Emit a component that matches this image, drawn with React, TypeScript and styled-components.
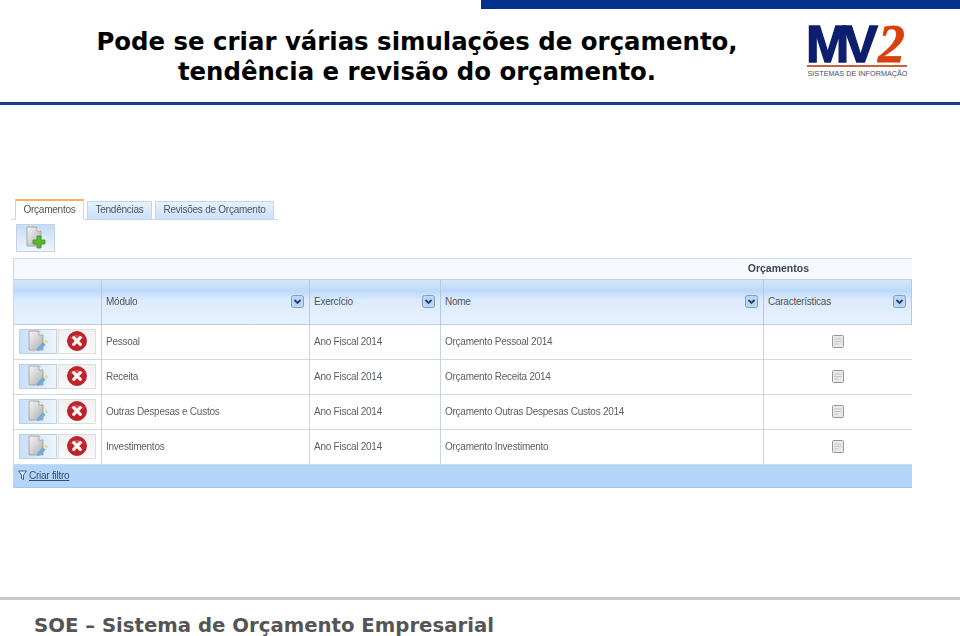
import styled, { createGlobalStyle } from "styled-components";

const GlobalStyle = createGlobalStyle`
  html, body {
    margin: 0;
    padding: 0;
    background: #fff;
  }
  * {
    box-sizing: border-box;
  }
`;

const Page = styled.div`
  width: 960px;
  height: 636px;
  overflow: hidden;
  display: flex;
  flex-direction: column;
`;

const Header = styled.header`
  height: 105px;
  flex: none;
  border-bottom: 3px solid #153f8c;
  display: flex;
  flex-direction: column;
`;

const TopBar = styled.div`
  height: 9px;
  flex: none;
  margin-left: 481px;
  background: #023189;
`;

const HeaderBody = styled.div`
  flex: 1;
  display: flex;
  align-items: flex-start;
`;

const Title = styled.h1`
  width: 660px;
  margin: 18px 0 0 87px;
  font-family: "DejaVu Sans", Verdana, sans-serif;
  font-size: 24.4px;
  line-height: 30px;
  font-weight: 700;
  color: #000;
  text-align: center;
`;

const Logo = styled.svg`
  flex: none;
  margin: 4px 0 0 60px;
`;

const Main = styled.main`
  flex: 1;
  padding: 94px 49px 0 13px;
  filter: blur(0.4px);
  font-family: "Liberation Sans", Tahoma, sans-serif;
  font-size: 10px;
  letter-spacing: -0.25px;
`;

const Tabs = styled.div`
  display: flex;
  align-items: flex-end;
  gap: 3px;
  height: 21px;
  margin-left: -2px;
  padding-left: 4px;
  width: 267px;
  border-bottom: 1px solid #c6d6e6;
`;

const Tab = styled.div<{ $active?: boolean; $width: number }>`
  width: ${(p) => p.$width}px;
  height: ${(p) => (p.$active ? "21px" : "19px")};
  margin-bottom: -1px;
  padding-bottom: 2px;
  display: flex;
  align-items: center;
  justify-content: center;
  white-space: nowrap;
  color: #50565c;
  border: 1px solid #c6d6e6;
  border-top: ${(p) => (p.$active ? "2px solid #f5b060" : "1px solid #c6d6e6")};
  border-bottom: ${(p) => (p.$active ? "1px solid #fff" : "1px solid #c6d6e6")};
  background: ${(p) =>
    p.$active ? "#fff" : "linear-gradient(#e6f1fd, #c9e0f9)"};
`;

const AddButton = styled.div`
  width: 39px;
  height: 28px;
  margin: 4px 0 6px 3px;
  display: flex;
  align-items: center;
  justify-content: center;
  border: 1px solid #c3d3e2;
  background: linear-gradient(#c4dcf7, #eef5fd);
`;

const Grid = styled.div`
  display: grid;
  grid-template-columns: 88px 208px 131px 323px 148px;
  width: 898px;
  border-left: 1px solid #c9d9e6;
`;

const Caption = styled.div`
  grid-column: 1 / -1;
  height: 22px;
  padding: 0 103px 2px 0;
  display: flex;
  align-items: center;
  justify-content: flex-end;
  font-size: 10.5px;
  letter-spacing: 0;
  font-weight: 700;
  color: #3c4650;
  background: #f5f9fe;
  border-top: 1px solid #cbdbe6;
  border-bottom: 1px solid #b9cfe2;
`;

const HeadCell = styled.div`
  height: 45px;
  padding: 0 5px 1px 4px;
  display: flex;
  align-items: center;
  justify-content: space-between;
  color: #50565c;
  background: linear-gradient(#d4e6fb 0, #bcd9f9 25%, #dcebfd 45%, #e6f1fe 100%);
  border-right: 1px solid #b4c9dc;
  border-bottom: 1px solid #b9cfe2;
  &:last-child {
    border-right: none;
  }
`;

const Cell = styled.div<{ $center?: boolean; $last?: boolean }>`
  height: 35px;
  padding: 0 4px 2px;
  display: flex;
  align-items: center;
  justify-content: ${(p) => (p.$center ? "center" : "flex-start")};
  color: #5a5f64;
  border-right: ${(p) => (p.$last ? "none" : "1px solid #c3d4e2")};
  border-bottom: 1px solid #c9dbe8;
`;

const Actions = styled(Cell)`
  padding: 0 0 2px 5px;
  gap: 1px;
`;

const RowButton = styled.div<{ $delete?: boolean }>`
  width: 38px;
  height: 25px;
  display: flex;
  align-items: center;
  justify-content: center;
  border: 1px solid ${(p) => (p.$delete ? "#dedede" : "#b9cfe4")};
  background: ${(p) =>
    p.$delete
      ? "linear-gradient(#f0f0f0, #fafafa)"
      : "linear-gradient(90deg, #c8dff8, #eef5fd)"};
`;

const Footer = styled.div`
  grid-column: 1 / -1;
  height: 23px;
  margin-left: -1px;
  padding: 0 0 2px 5px;
  display: flex;
  align-items: center;
  gap: 2px;
  color: #33506e;
  background: #b5d4f9;
  border-bottom: 1px solid #a8c4e4;
  span {
    text-decoration: underline;
  }
`;

const BottomBar = styled.footer`
  height: 39px;
  flex: none;
  border-top: 3px solid #c9c9c9;
  padding: 13px 0 0 34px;
  font-family: "DejaVu Sans", Verdana, sans-serif;
  font-size: 19.7px;
  line-height: 26px;
  font-weight: 700;
  color: #555;
  white-space: nowrap;
`;

function DocShape() {
  return (
    <>
      <path d="M3 1h10l4 4v15H3z" fill="url(#docFill)" stroke="#9a9a9a" strokeWidth="0.8" />
      <path d="M13 1v4h4" fill="#fff" stroke="#9a9a9a" strokeWidth="0.8" />
    </>
  );
}

function DocDefs() {
  return (
    <svg width="0" height="0" style={{ position: "absolute" }}>
      <defs>
        <linearGradient id="docFill" x1="0" y1="0" x2="1" y2="1">
          <stop offset="0" stopColor="#f6f6f6" />
          <stop offset="1" stopColor="#aeaeae" />
        </linearGradient>
      </defs>
    </svg>
  );
}

function AddIcon() {
  return (
    <svg width="24" height="24" viewBox="0 0 24 24">
      <DocShape />
      <path
        d="M13 10h4v4h4v4h-4v4h-4v-4H9v-4h4z"
        fill="#5cb82e"
        stroke="#3f8f1e"
        strokeWidth="0.8"
      />
    </svg>
  );
}

function EditIcon() {
  return (
    <svg width="24" height="22" viewBox="0 0 24 22">
      <DocShape />
      <path d="M11 21l.6-3.4 5.4-5.4 2.6 2.6-5.4 5.4z" fill="#6aaedd" />
      <path d="M18 11.2l2-2 2.6 2.6-2 2z" fill="#efd98c" />
    </svg>
  );
}

function DeleteIcon() {
  return (
    <svg width="20" height="20" viewBox="0 0 21 21">
      <circle cx="10.5" cy="10.5" r="10" fill="#c4222a" stroke="#9f1a20" strokeWidth="0.8" />
      <path d="M3 8a8 6 0 0 1 15 0z" fill="#e0575c" opacity="0.7" />
      <path d="M7 7l7 7M14 7l-7 7" stroke="#fff" strokeWidth="3.2" strokeLinecap="round" />
    </svg>
  );
}

function MenuIcon() {
  return (
    <svg width="13" height="13" viewBox="0 0 13 13">
      <rect x="0.5" y="0.5" width="12" height="12" rx="2" fill="#bcd5f1" stroke="#7e9fc4" />
      <path d="M3.5 5l3 3 3-3" fill="none" stroke="#1f3f78" strokeWidth="1.8" />
    </svg>
  );
}

function NoteIcon() {
  return (
    <svg width="12" height="13" viewBox="0 0 12 13">
      <rect x="0.5" y="0.5" width="11" height="12" rx="1" fill="#e8e8e8" stroke="#999" />
      <path d="M2.5 4h7M2.5 6.5h7M2.5 9h4" stroke="#c4c4c4" />
    </svg>
  );
}

function FunnelIcon() {
  return (
    <svg width="9" height="10" viewBox="0 0 9 10">
      <path d="M0.5 1h8L5.5 5v4.5l-2-1V5z" fill="#e8f0f8" stroke="#44617f" />
    </svg>
  );
}

const rows = [
  ["Pessoal", "Orçamento Pessoal 2014"],
  ["Receita", "Orçamento Receita 2014"],
  ["Outras Despesas e Custos", "Orçamento Outras Despesas Custos 2014"],
  ["Investimentos", "Orçamento Investimento"],
];

const columns = ["Módulo", "Exercício", "Nome", "Características"];

export default function App() {
  return (
    <Page>
      <GlobalStyle />
      <DocDefs />
      <Header>
        <TopBar />
        <HeaderBody>
          <Title>
            Pode se criar várias simulações de orçamento,
            <br />
            tendência e revisão do orçamento.
          </Title>
          <Logo width="108" height="76" viewBox="0 0 108 76">
            <text
              x="-1"
              y="49"
              fontFamily="Liberation Sans, sans-serif"
              fontWeight="700"
              fontSize="52"
              letterSpacing="-6"
              fill="#0c1e6e"
              stroke="#0c1e6e"
              strokeWidth="1.4"
            >
              MV
            </text>
            <text
              x="71"
              y="49"
              fontFamily="Liberation Serif, serif"
              fontWeight="700"
              fontStyle="italic"
              fontSize="54"
              fill="#d8400e"
              stroke="#d8400e"
              strokeWidth="0.8"
            >
              2
            </text>
            <rect x="0" y="52" width="100" height="2" fill="#c9603f" />
            <text
              x="0.5"
              y="63"
              fontFamily="Liberation Sans, sans-serif"
              fontSize="8"
              textLength="100"
              lengthAdjust="spacingAndGlyphs"
              fill="#4a4f63"
            >
              SISTEMAS DE INFORMAÇÃO
            </text>
          </Logo>
        </HeaderBody>
      </Header>
      <Main>
        <Tabs>
          <Tab $active $width={69}>Orçamentos</Tab>
          <Tab $width={65}>Tendências</Tab>
          <Tab $width={119}>Revisões de Orçamento</Tab>
        </Tabs>
        <AddButton>
          <AddIcon />
        </AddButton>
        <Grid>
          <Caption>Orçamentos</Caption>
          <HeadCell />
          {columns.map((c) => (
            <HeadCell key={c}>
              {c}
              <MenuIcon />
            </HeadCell>
          ))}
          {rows.map(([mod, name]) => (
            <Row key={mod} mod={mod} name={name} />
          ))}
          <Footer>
            <FunnelIcon />
            <span>Criar filtro</span>
          </Footer>
        </Grid>
      </Main>
      <BottomBar>SOE – Sistema de Orçamento Empresarial</BottomBar>
    </Page>
  );
}

function Row({ mod, name }: { mod: string; name: string }) {
  return (
    <>
      <Actions>
        <RowButton>
          <EditIcon />
        </RowButton>
        <RowButton $delete>
          <DeleteIcon />
        </RowButton>
      </Actions>
      <Cell>{mod}</Cell>
      <Cell>Ano Fiscal 2014</Cell>
      <Cell>{name}</Cell>
      <Cell $center $last>
        <NoteIcon />
      </Cell>
    </>
  );
}
